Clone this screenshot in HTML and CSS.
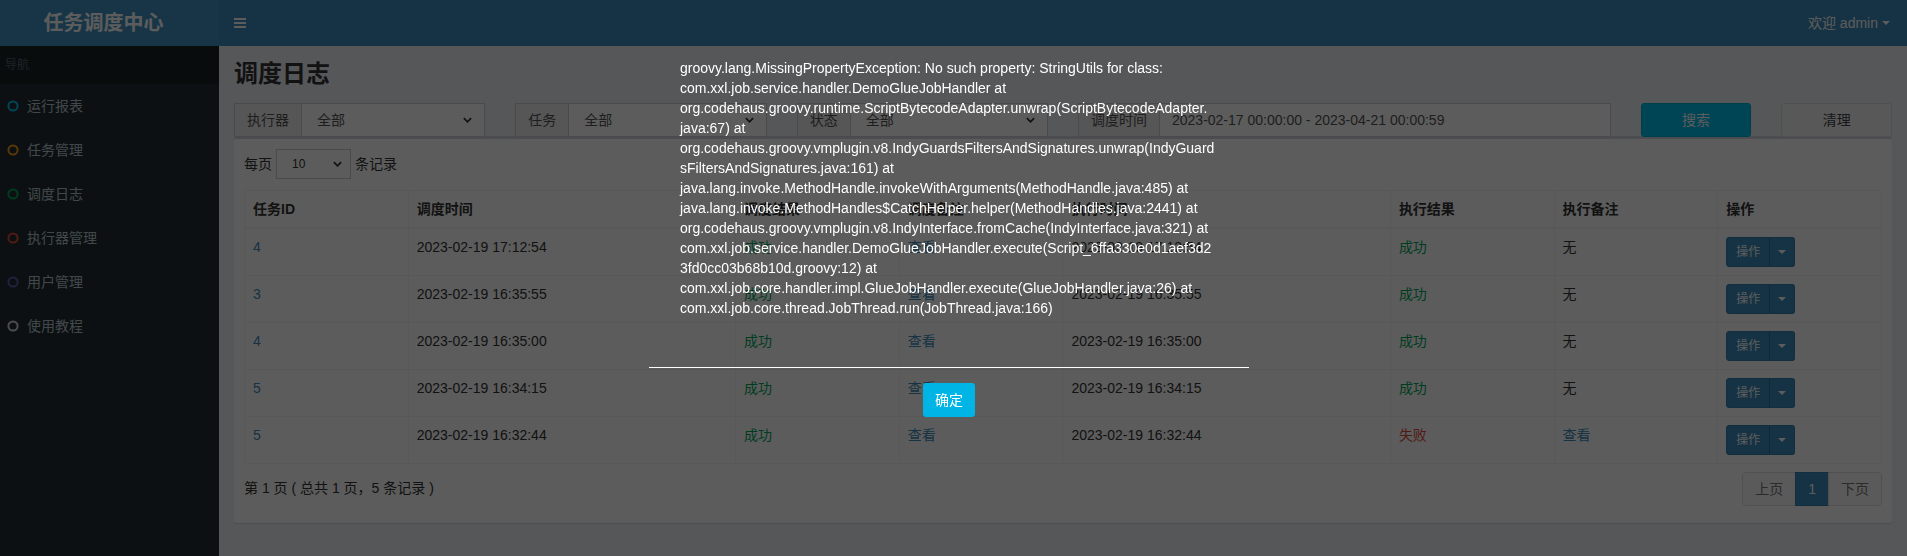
FILE: index.html
```html
<!DOCTYPE html>
<html lang="zh-CN">
<head>
<meta charset="utf-8">
<title>调度日志</title>
<link rel="stylesheet" href="styles.css">
</head>
<body>
<div class="wrapper">
  <header class="main-header">
    <a class="logo">任务调度中心</a>
    <nav class="navbar">
      <span class="toggle">
        <svg width="12" height="12" viewBox="0 0 12 12"><rect x="0" y="1" width="12" height="2"/><rect x="0" y="5" width="12" height="2"/><rect x="0" y="9" width="12" height="2"/></svg>
      </span>
      <span class="user">欢迎 admin <span class="caret"></span></span>
    </nav>
  </header>
  <div class="layout">
    <aside class="sidebar">
      <div class="nav-header">导航</div>
      <div class="nav-item"><svg viewBox="0 0 12 12"><circle cx="6" cy="6" r="4.6" class="c-aqua"/></svg>运行报表</div>
      <div class="nav-item"><svg viewBox="0 0 12 12"><circle cx="6" cy="6" r="4.6" class="c-yellow"/></svg>任务管理</div>
      <div class="nav-item"><svg viewBox="0 0 12 12"><circle cx="6" cy="6" r="4.6" class="c-green"/></svg>调度日志</div>
      <div class="nav-item"><svg viewBox="0 0 12 12"><circle cx="6" cy="6" r="4.6" class="c-red"/></svg>执行器管理</div>
      <div class="nav-item"><svg viewBox="0 0 12 12"><circle cx="6" cy="6" r="4.6" class="c-purple"/></svg>用户管理</div>
      <div class="nav-item"><svg viewBox="0 0 12 12"><circle cx="6" cy="6" r="4.6" class="c-gray"/></svg>使用教程</div>
    </aside>
    <main class="content">
      <h1 class="page-title">调度日志</h1>
      <div class="filters">
        <div class="input-group span2">
          <span class="addon">执行器</span>
          <div class="select">全部<svg class="chev" viewBox="0 0 10 6"><polyline points="1,1 5,5 9,1"/></svg></div>
        </div>
        <div class="input-group span2">
          <span class="addon">任务</span>
          <div class="select">全部<svg class="chev" viewBox="0 0 10 6"><polyline points="1,1 5,5 9,1"/></svg></div>
        </div>
        <div class="input-group span2">
          <span class="addon">状态</span>
          <div class="select">全部<svg class="chev" viewBox="0 0 10 6"><polyline points="1,1 5,5 9,1"/></svg></div>
        </div>
        <div class="input-group span4">
          <span class="addon">调度时间</span>
          <div class="input">2023-02-17 00:00:00 - 2023-04-21 00:00:59</div>
        </div>
        <button class="btn btn-info">搜索</button>
        <button class="btn btn-default">清理</button>
      </div>
      <div class="box">
        <div class="length">
          <span>每页</span>
          <div class="select-sm">10<svg class="chev" viewBox="0 0 10 6"><polyline points="1,1 5,5 9,1"/></svg></div>
          <span>条记录</span>
        </div>
        <table class="log-table">
          <colgroup>
            <col class="w10"><col class="w20"><col class="w10"><col class="w10"><col class="w20"><col class="w10"><col class="w10"><col class="w10">
          </colgroup>
          <thead>
            <tr><th>任务ID</th><th>调度时间</th><th>调度结果</th><th>调度备注</th><th>执行时间</th><th>执行结果</th><th>执行备注</th><th>操作</th></tr>
          </thead>
          <tbody>
            <tr><td class="link">4</td><td>2023-02-19 17:12:54</td><td class="ok">成功</td><td class="link">查看</td><td>2023-02-19 17:12:54</td><td class="ok">成功</td><td>无</td><td><div class="btn-group"><span class="op">操作</span><span class="op-caret"><span class="caret"></span></span></div></td></tr>
            <tr><td class="link">3</td><td>2023-02-19 16:35:55</td><td class="ok">成功</td><td class="link">查看</td><td>2023-02-19 16:35:55</td><td class="ok">成功</td><td>无</td><td><div class="btn-group"><span class="op">操作</span><span class="op-caret"><span class="caret"></span></span></div></td></tr>
            <tr><td class="link">4</td><td>2023-02-19 16:35:00</td><td class="ok">成功</td><td class="link">查看</td><td>2023-02-19 16:35:00</td><td class="ok">成功</td><td>无</td><td><div class="btn-group"><span class="op">操作</span><span class="op-caret"><span class="caret"></span></span></div></td></tr>
            <tr><td class="link">5</td><td>2023-02-19 16:34:15</td><td class="ok">成功</td><td class="link">查看</td><td>2023-02-19 16:34:15</td><td class="ok">成功</td><td>无</td><td><div class="btn-group"><span class="op">操作</span><span class="op-caret"><span class="caret"></span></span></div></td></tr>
            <tr><td class="link">5</td><td>2023-02-19 16:32:44</td><td class="ok">成功</td><td class="link">查看</td><td>2023-02-19 16:32:44</td><td class="fail">失败</td><td class="link">查看</td><td><div class="btn-group"><span class="op">操作</span><span class="op-caret"><span class="caret"></span></span></div></td></tr>
          </tbody>
        </table>
        <div class="table-foot">
          <div class="info">第 1 页 ( 总共 1 页，5 条记录 )</div>
          <ul class="pagination">
            <li>上页</li>
            <li class="active">1</li>
            <li>下页</li>
          </ul>
        </div>
      </div>
    </main>
  </div>
</div>
<div class="shade"></div>
<div class="dialog">
  <p class="dialog-text">groovy.lang.MissingPropertyException: No such property: StringUtils for class:<br>com.xxl.job.service.handler.DemoGlueJobHandler at<br>org.codehaus.groovy.runtime.ScriptBytecodeAdapter.unwrap(ScriptBytecodeAdapter.<br>java:67) at<br>org.codehaus.groovy.vmplugin.v8.IndyGuardsFiltersAndSignatures.unwrap(IndyGuard<br>sFiltersAndSignatures.java:161) at<br>java.lang.invoke.MethodHandle.invokeWithArguments(MethodHandle.java:485) at<br>java.lang.invoke.MethodHandles$CatchHelper.helper(MethodHandles.java:2441) at<br>org.codehaus.groovy.vmplugin.v8.IndyInterface.fromCache(IndyInterface.java:321) at<br>com.xxl.job.service.handler.DemoGlueJobHandler.execute(Script_6ffa330e0d1aef3d2<br>3fd0cc03b68b10d.groovy:12) at<br>com.xxl.job.core.handler.impl.GlueJobHandler.execute(GlueJobHandler.java:26) at<br>com.xxl.job.core.thread.JobThread.run(JobThread.java:166)</p>
  <div class="dialog-btns"><button class="btn-ok">确定</button></div>
</div>
</body>
</html>
```
FILE: styles.css
```css
* { box-sizing: border-box; }
html, body { margin: 0; height: 100%; }
body {
  font-family: "Liberation Sans", Arial, "Noto Sans CJK SC", sans-serif;
  font-size: 14px;
  line-height: 20px;
  color: #333;
  background: #ecf0f5;
  overflow: hidden;
}

.main-header { display: flex; height: 46px; }
.logo {
  width: 219px;
  flex-shrink: 0;
  background: #4193c4;
  color: #fff;
  font-size: 20px;
  font-weight: bold;
  display: flex;
  align-items: center;
  justify-content: center;
  padding-right: 12px;
}
.navbar {
  flex: 1;
  background: #3c8dbc;
  display: flex;
  align-items: center;
  justify-content: space-between;
  padding: 0 17px 0 15px;
  color: #fff;
}
.toggle svg { display: block; fill: #fff; }
.user { display: flex; align-items: center; gap: 4px; }
.caret {
  display: inline-block;
  width: 0; height: 0;
  border-top: 4px solid currentColor;
  border-left: 4px solid transparent;
  border-right: 4px solid transparent;
}

.layout { display: flex; height: 510px; }
.sidebar { width: 219px; flex-shrink: 0; background: #222d32; }
.nav-header {
  height: 38px;
  background: #1a2226;
  color: #4b646f;
  font-size: 12px;
  padding: 0 5px;
  display: flex;
  align-items: center;
}
.nav-item {
  height: 44px;
  display: flex;
  align-items: center;
  padding-left: 7px;
  color: #b8c7ce;
}
.nav-item svg { width: 12px; height: 12px; margin-right: 8px; fill: none; stroke-width: 2; }
.c-aqua { stroke: #00c0ef; }
.c-yellow { stroke: #f39c12; }
.c-green { stroke: #00a65a; }
.c-red { stroke: #dd4b39; }
.c-purple { stroke: #605ca8; }
.c-gray { stroke: #d2d6de; }

.content { flex: 1; padding: 15px 15px 0; min-width: 0; }
.page-title { margin: 0; font-size: 24px; line-height: 26px; font-weight: bold; color: #333; }

.filters {
  display: grid;
  grid-template-columns: repeat(12, 1fr);
  column-gap: 30px;
  margin-top: 16px;
}
.span2 { grid-column: span 2; }
.span4 { grid-column: span 4; }
.input-group { display: flex; height: 34px; }
.addon {
  padding: 6px 12px;
  border: 1px solid #ccc;
  border-right: 0;
  background: #eee;
  color: #555;
  white-space: nowrap;
}
.select, .input {
  flex: 1;
  min-width: 0;
  border: 1px solid #ccc;
  background: #fff;
  color: #555;
  padding: 6px 12px 6px 15px;
  display: flex;
  align-items: center;
  justify-content: space-between;
  white-space: nowrap;
}
.input { padding-left: 12px; }
.chev { width: 9px; height: 6px; fill: none; stroke: #333; stroke-width: 2; }
.btn {
  height: 34px;
  border-radius: 3px;
  font: inherit;
  border: 1px solid transparent;
}
.btn-info { background: #00c0ef; border-color: #00acd6; color: #fff; }
.btn-default { background: #f4f4f4; border-color: #ddd; color: #444; }

.box {
  margin-top: -1px;
  background: #fff;
  border-top: 3px solid #d2d6de;
  border-radius: 3px;
  box-shadow: 0 1px 1px rgba(0,0,0,.1);
  padding: 10px 10px 17px;
}
.length { display: flex; align-items: center; height: 30px; gap: 4px; margin-bottom: 11px; }
.select-sm {
  width: 75px;
  height: 30px;
  border: 1px solid #ccc;
  font-size: 12px;
  padding: 0 8px 0 15px;
  display: flex;
  align-items: center;
  justify-content: space-between;
}

.log-table { width: 100%; border-collapse: collapse; table-layout: fixed; border: 1px solid #f4f4f4; }
.w10 { width: 10%; }
.w20 { width: 20%; }
.log-table th, .log-table td {
  padding: 8px;
  border: 1px solid #f4f4f4;
  text-align: left;
  vertical-align: top;
  white-space: nowrap;
  overflow: hidden;
}
.log-table th { font-weight: bold; border-bottom-width: 2px; }
.link { color: #3c8dbc; }
.ok { color: #00a65a; }
.fail { color: #dd4b39; }
.btn-group { display: inline-flex; height: 30px; }
.op {
  background: #3c8dbc;
  border: 1px solid #367fa9;
  color: #fff;
  font-size: 12px;
  line-height: 18px;
  padding: 5px 9px;
  border-radius: 3px 0 0 3px;
}
.op-caret {
  background: #3c8dbc;
  border: 1px solid #367fa9;
  border-left-color: #2e6f96;
  color: #fff;
  width: 26px;
  display: flex;
  align-items: center;
  justify-content: center;
  border-radius: 0 3px 3px 0;
  margin-left: -1px;
}

.table-foot { display: flex; justify-content: space-between; margin-top: 8px; }
.info { padding-top: 6px; }
.pagination { display: flex; list-style: none; margin: 0; padding: 0; }
.pagination li {
  padding: 6px 12px;
  border: 1px solid #ddd;
  background: #fafafa;
  color: #777;
  margin-left: -1px;
}
.pagination li:first-child { border-radius: 4px 0 0 4px; }
.pagination li:last-child { border-radius: 0 4px 4px 0; }
.pagination li.active { background: #3c8dbc; border-color: #367fa9; color: #fff; }

.shade { position: fixed; inset: 0; background: rgba(0,0,0,.64); }
.dialog {
  position: absolute;
  left: 649px;
  top: 38px;
  width: 600px;
  color: #fff;
}
.dialog-text {
  margin: 0;
  padding: 20px 20px 0 31px;
  white-space: nowrap;
  height: 330px;
  border-bottom: 1px solid #fff;
}
.dialog-btns { text-align: center; padding-top: 15px; }
.btn-ok {
  width: 52px;
  height: 34px;
  border: 0;
  border-radius: 3px;
  background: #00b5e6;
  color: #fff;
  font: inherit;
}
```
